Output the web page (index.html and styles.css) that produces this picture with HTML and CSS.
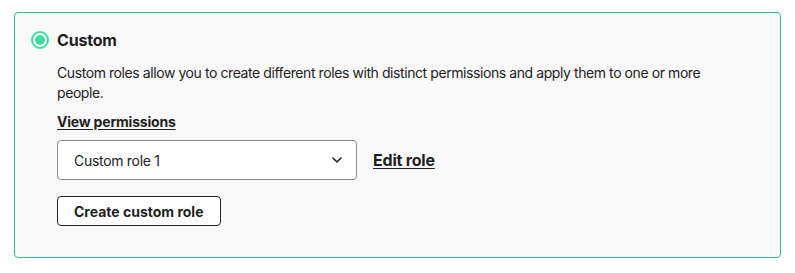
FILE: index.html
```html
<!DOCTYPE html>
<html lang="en">
<head>
    <meta charset="UTF-8">
    <title>Custom roles</title>
    <link rel="stylesheet" href="styles.css">
</head>
<body>
    <div class="card">
        <div class="card-header">
            <span class="radio"><span class="radio-dot"></span></span>
            <span class="title">Custom</span>
        </div>
        <div class="card-body">
            <p class="desc">Custom roles allow you to create different roles with distinct permissions and apply them to one or more people.</p>
            <a class="link" href="#">View permissions</a>
            <div class="role-row">
                <div class="select">
                    <span>Custom role 1</span>
                    <svg class="chevron" width="10" height="6" viewBox="0 0 10 6" fill="none">
                        <path d="M1 1l4 4 4-4" stroke="#222" stroke-width="1.6" stroke-linecap="round" stroke-linejoin="round"/>
                    </svg>
                </div>
                <a class="link edit" href="#">Edit role</a>
            </div>
            <button class="btn">Create custom role</button>
        </div>
    </div>
</body>
</html>
```

FILE: styles.css
```css
* {
    margin: 0;
    padding: 0;
    box-sizing: border-box;
}

body {
    font-family: Inter, "Noto Sans", sans-serif;
    color: #1f1f1f;
    background: #fff;
}

.card {
    margin: 12px 0 0 14px;
    width: 767px;
    height: 246px;
    padding: 15px 16px 31px;
    border: 1px solid #2dbf8f;
    border-radius: 4px;
    background: #f9f9f9;
}

.card-header {
    display: flex;
    align-items: center;
    gap: 8px;
    height: 24px;
}

.radio {
    width: 18px;
    height: 18px;
    border-radius: 50%;
    border: 2px solid #3ddc9f;
    background: #fff;
    display: flex;
    align-items: center;
    justify-content: center;
}

.radio-dot {
    width: 10px;
    height: 10px;
    border-radius: 50%;
    background: #3ddc9f;
}

.title {
    font-size: 16px;
    font-weight: 700;
    line-height: 24px;
    letter-spacing: -0.2px;
}

.card-body {
    padding-left: 26px;
}

.desc {
    max-width: 690px;
    margin-top: 11px;
    font-size: 14px;
    line-height: 20px;
    letter-spacing: -0.42px;
    color: #222;
}

.link {
    display: inline-block;
    margin-top: 9px;
    font-size: 14px;
    line-height: 20px;
    font-weight: 700;
    letter-spacing: -0.2px;
    color: #1f1f1f;
    text-decoration: underline;
    text-underline-offset: 2px;
}

.role-row {
    display: flex;
    align-items: center;
    gap: 16px;
    margin-top: 8px;
}

.select {
    width: 300px;
    height: 40px;
    padding: 0 14px 0 16px;
    display: flex;
    align-items: center;
    justify-content: space-between;
    background: #fff;
    border: 1px solid #8c8c8c;
    border-radius: 4px;
    font-size: 14px;
    letter-spacing: -0.3px;
    color: #222;
}

.edit {
    margin-top: 0;
    font-size: 16px;
    line-height: 24px;
}

.btn {
    display: block;
    margin-top: 16px;
    height: 30px;
    padding: 0 16px;
    background: #fff;
    border: 1px solid #222;
    border-radius: 4px;
    font-family: inherit;
    font-size: 14px;
    font-weight: 700;
    color: #1f1f1f;
}
```
